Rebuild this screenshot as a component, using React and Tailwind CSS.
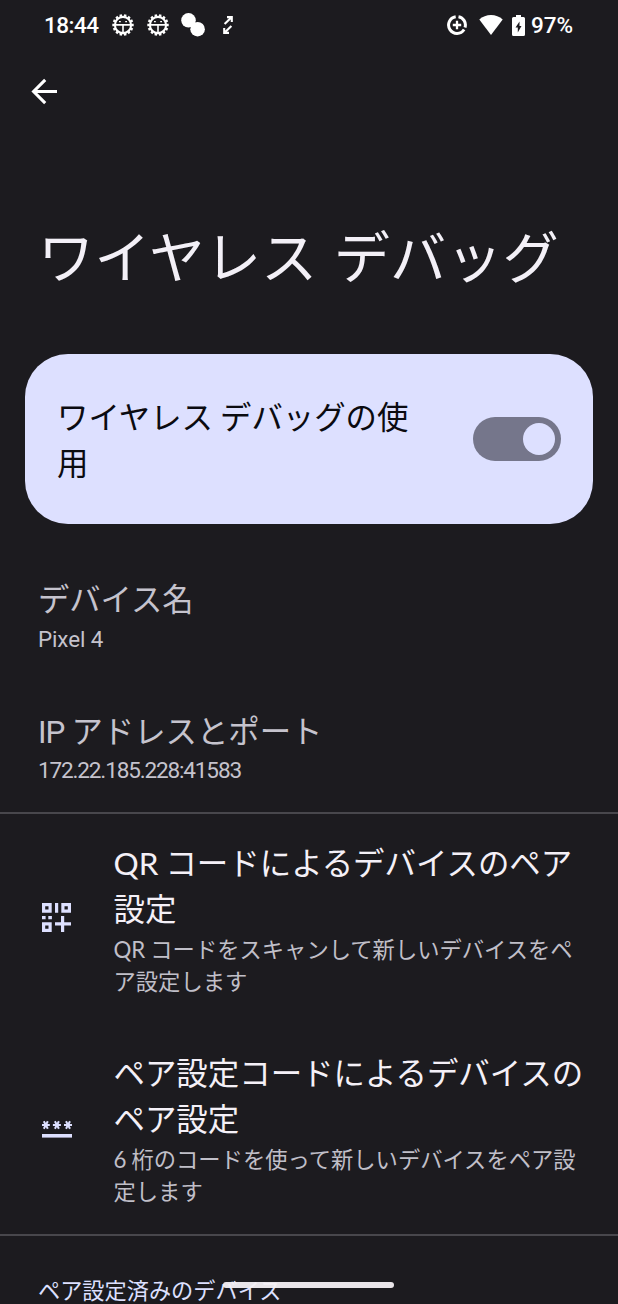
const JP = "font-['Noto_Sans_CJK_JP',sans-serif]";

function BugIcon() {
  const teeth = Array.from({ length: 14 }, (_, i) => ((i + 0.5) * 360) / 14);
  return (
    <svg width="22" height="22" viewBox="-11 -11 22 22" fill="none" stroke="#fff">
      <circle r="8.1" strokeWidth="2.1" />
      {teeth.map((a) => (
        <path key={a} d="M0 -8.5V-10.700" strokeWidth="2.5" transform={`rotate(${a})`} />
      ))}
      <path d="M-8 -0.100H8M0 0V8" strokeWidth="1.6" />
      <path d="M-4 -3.300h1.800M2.200 -3.300h1.800" strokeWidth="1.3" />
    </svg>
  );
}

function StatusBar() {
  return (
    <header className="flex h-[50px] shrink-0 items-center pl-[44px] pr-[44px] text-white">
      <span className="w-[68px] whitespace-nowrap font-['Roboto',sans-serif] text-[22.5px] font-medium leading-none tracking-[-0.5px]">18:44</span>
      <BugIcon />
      <div className="w-[13px]" />
      <BugIcon />
      <svg className="ml-[12px]" width="24" height="24" viewBox="0 0 24 24" fill="#fff">
        <circle cx="7.5" cy="7.3" r="7.3" />
        <circle cx="16.6" cy="16.2" r="7.3" />
      </svg>
      <svg className="ml-[18px]" width="10" height="18" viewBox="0 0 10 18" fill="none" stroke="#fff" strokeWidth="2.1">
        <path d="M1.6 8L8 1.8M4 1.100H8.8V6M8.4 10L2 16.2M6 16.900H1.2V12" />
      </svg>
      <div className="flex-1" />
      <svg width="20" height="20" viewBox="-10 -10 20 20" fill="none" stroke="#fff">
        <path d="M-1.3 -8.3A8.4 8.4 0 1 0 7.1 4.5M1.5 -8.3A8.4 8.4 0 0 1 8 2.5" strokeWidth="3" />
        <path d="M-4.200 0H4.200M0 -4.200V4.200" strokeWidth="2.3" />
      </svg>
      <svg className="ml-[12px]" width="24" height="20" viewBox="0 0 24 20" fill="#fff">
        <path d="M12 20L0.3 4.6C3.5 1.6 7.5 0 12 0s8.500 1.600 11.700 4.600z" />
      </svg>
      <svg className="ml-[9px]" width="13" height="21" viewBox="0 0 13 21">
        <path fill="#fff" d="M4 0h5v2h2.500a1.500 1.500 0 0 1 1.500 1.500v16a1.500 1.500 0 0 1-1.500 1.500h-10a1.500 1.500 0 0 1-1.500-1.500v-16a1.500 1.500 0 0 1 1.500-1.500h2.500z" />
        <path fill="#1c1b1f" d="M7.500 6.500L3.500 12.500h2.300v5L9.500 11h-2z" />
      </svg>
      <span className="ml-[6px] w-[43px] whitespace-nowrap font-['Roboto',sans-serif] text-[22.5px] font-medium leading-none">97%</span>
    </header>
  );
}

function QrIcon() {
  return (
    <svg width="30" height="30" viewBox="0 0 30 30" fill="#dde0ff">
      <path fillRule="evenodd" d="M0 0h9.700v9.700H0zM3.200 3.200v3.300h3.300V3.200zM19.300 0h9.700v9.700h-9.700zM22.500 3.200v3.300h3.300V3.200zM0 19.300h9.700V29H0zM3.200 22.500v3.300h3.300v-3.300z" />
      <path d="M13 0h3.200v9.700H13zM0 12.900h3.600v3.300H0zM6.300 12.900h3.600v3.300H6.300zM19 12.900h3.200v6.300H29v3.200h-6.800V29H19v-6.600h-6v-3.200h6z" />
    </svg>
  );
}

function CodeIcon() {
  return (
    <svg width="31" height="20" viewBox="0 0 31 20" fill="none" stroke="#dde0ff">
      {[3.8, 14.9, 26].map((x) => (
        <path key={x} strokeWidth="2" transform={`translate(${x} 7)`} d="M-4 0H4M-2 -3.700L2 3.700M2 -3.700L-2 3.700" />
      ))}
      <path d="M0 17.800H30" strokeWidth="3.600" />
    </svg>
  );
}

function Line({ className = "", children }) {
  return <span className={`block whitespace-nowrap ${className}`}>{children}</span>;
}

function Geo({ children }) {
  return <span className="font-['Lato',sans-serif] leading-none">{children}</span>;
}

function PairRow({ className, icon, title, summary }) {
  return (
    <div className={`flex items-center ${className}`}>
      <div className="w-[113.5px] pl-[42px]">{icon}</div>
      <div>
        <div className="mb-px text-[31.45px] leading-[46px] text-[#f4f0f7]">{title}</div>
        <div className="pb-px text-[22.3px] leading-[32px] text-[#c0bfc8]">{summary}</div>
      </div>
    </div>
  );
}

export default function App() {
  return (
    <div lang="ja" className={`relative flex h-[1304px] w-[618px] flex-col overflow-hidden bg-[#1c1b1f] ${JP}`}>
      <StatusBar />
      <div className="flex h-[82px] shrink-0 items-center pl-[31px]">
        <svg width="27" height="27" viewBox="0 0 27 27" fill="none" stroke="#fff" strokeWidth="3.100">
          <path d="M26 13.500H3M14.200 1.900L2.600 13.500L14.200 25.100" />
        </svg>
      </div>
      <h1 className="mt-[80px] h-[84px] shrink-0 whitespace-nowrap pl-[38px] text-[56.2px] leading-[84px] text-[#f3f0f7] [word-spacing:4px]">ワイヤレス デバッグ</h1>

      <section className="mx-[25px] mt-[58px] flex h-[170px] shrink-0 items-center justify-between rounded-[43px] bg-[#dde0ff] pl-[32px] pr-[32px]">
        <div className="text-[31.4px] leading-[46px] text-[#0b0b10]">
          <Line>ワイヤレス デバッグの使</Line>
          <Line>用</Line>
        </div>
        <div className="flex h-[44px] w-[88px] items-center justify-end rounded-full bg-[#75768b] pr-[6px]">
          <div className="size-[32px] rounded-full bg-[#dde0ff]" />
        </div>
      </section>

      <section className="mt-[51px] h-[132px] shrink-0 pl-[38px] text-[#c5c3cd]">
        <Line className="text-[31.3px] leading-[46px]">デバイス名</Line>
        <Line className="mt-[2px] font-['Roboto',sans-serif] text-[22.4px] leading-[32px] tracking-[-0.1px]">Pixel 4</Line>
      </section>
      <section className="h-[105px] shrink-0 pl-[38px] text-[#c5c3cd]">
        <Line className="text-[31.4px] leading-[46px]">
          <span className="font-['Roboto',sans-serif] leading-none tracking-[-1px]">IP</span> アドレスとポート
        </Line>
        <Line className="mt-[2px] font-['Roboto',sans-serif] text-[22.6px] leading-[32px] tracking-[-1.18px]">172.22.185.228:41583</Line>
      </section>

      <section className="h-[424px] shrink-0 border-y-2 border-[#48474c]">
        <PairRow
          className="h-[208px]"
          icon={<QrIcon />}
          title={<><Line><Geo>QR</Geo> コードによるデバイスのペア</Line><Line>設定</Line></>}
          summary={<><Line><Geo>QR</Geo> コードをスキャンして新しいデバイスをペ</Line><Line>ア設定します</Line></>}
        />
        <PairRow
          className="h-[212px]"
          icon={<CodeIcon />}
          title={<><Line>ペア設定コードによるデバイスの</Line><Line>ペア設定</Line></>}
          summary={<><Line><Geo>6</Geo> 桁のコードを使って新しいデバイスをペア設</Line><Line>定します</Line></>}
        />
      </section>

      <h2 className="mt-[37px] shrink-0 whitespace-nowrap pl-[38px] text-[22.2px] leading-[32px] text-[#dde0ff]">ペア設定済みのデバイス</h2>
      <div className="absolute left-[223px] top-[1282px] h-[6px] w-[171px] rounded-full bg-[#f4f0f4]/95" />
    </div>
  );
}
